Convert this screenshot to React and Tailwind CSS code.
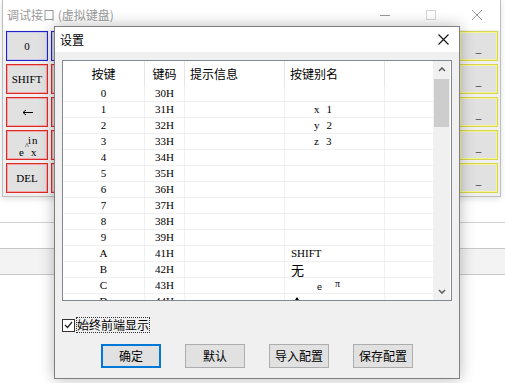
import React from "react";

const cjk = "font-[family-name:'Microsoft_YaHei','Noto_Sans_CJK_SC',sans-serif]";
const serif = "font-[family-name:'Liberation_Serif','Noto_Sans_CJK_SC',serif]";

const rows = [
  ["0", "30H", ""],
  ["1", "31H", "x 1"],
  ["2", "32H", "y 2"],
  ["3", "33H", "z 3"],
  ["4", "34H", ""],
  ["5", "35H", ""],
  ["6", "36H", ""],
  ["7", "37H", ""],
  ["8", "38H", ""],
  ["9", "39H", ""],
  ["A", "41H", "SHIFT"],
  ["B", "42H", "无"],
  ["C", "43H", "epi"],
  ["D", "44H", "caret"],
];

const keyStyles = {
  blue: "border-[#2222c8] shadow-[inset_0_0_0_1px_#c8c8ee]",
  red: "border-[#dd2a2a] shadow-[inset_0_0_0_1px_#f3a6a6]",
  yellow: "border-[#d6d650] shadow-[inset_0_0_0_1px_#f6f690]",
};

function Key({ color, w = "w-[42px]", children }) {
  return (
    <div
      className={`h-[30px] ${w} shrink-0 border bg-[#e1e1e1] flex items-center justify-center text-[11px] text-black ${serif} ${keyStyles[color]}`}>
      {children}
    </div>
  );
}

function ExpLabel() {
  return (
    <div className="relative w-[30px] h-[24px] leading-none">
      <span className="absolute left-[16px] top-[2px] tracking-[1px]">in</span>
      <span className="absolute left-[7px] top-[14px]">e</span>
      <span className="absolute left-[13px] top-[10px] text-[8px]">^</span>
      <span className="absolute left-[19px] top-[14px]">x</span>
    </div>
  );
}

function LeftArrow() {
  return (
    <svg width="11" height="7" viewBox="0 0 11 7" fill="none" stroke="#000" strokeWidth="1">
      <path d="M1 3.5H11M1 3.5L4 1M1 3.5L4 6" />
    </svg>
  );
}

function Chevron({ down }) {
  return (
    <svg width="8" height="5" viewBox="0 0 8 5" fill="none" stroke="#606060" strokeWidth="1.6">
      <path d={down ? "M1 1L4 4L7 1" : "M1 4L4 1L7 4"} />
    </svg>
  );
}

function KeyboardWindow() {
  const leftKeys = [
    ["blue", "0"],
    ["red", "SHIFT"],
    ["red", <LeftArrow />],
    ["red", <ExpLabel />],
    ["red", "DEL"],
  ];
  return (
    <div className="absolute left-[2px] top-0 w-[499px] h-[197px] flex flex-col border-x border-b border-[#bdbdbd] shadow-[0_2px_6px_rgba(0,0,0,0.12)]">
      <div className={`h-[30px] bg-white flex items-center pl-[4px] text-[12px] text-[#9a9a9a] ${cjk}`}>
        <span className="flex-1">调试接口 (虚拟键盘)</span>
        <div className="w-[46px] flex justify-center">
          <div className="w-[10px] h-px bg-[#9a9a9a]" />
        </div>
        <div className="w-[46px] flex justify-center">
          <div className="w-[10px] h-[10px] border border-[#d6d6d6]" />
        </div>
        <div className="w-[46px] flex justify-center">
          <svg width="10" height="10" viewBox="0 0 10 10" stroke="#9a9a9a" strokeWidth="1">
            <path d="M0 0L10 10M10 0L0 10" />
          </svg>
        </div>
      </div>
      <div className="flex-1 bg-[#f0f0f0] flex justify-between pl-[3px] pr-[2px] pt-px">
        <div className="flex gap-[3px]">
          <div className="flex flex-col gap-[3px]">
            {leftKeys.map(([c, label], i) => (
              <Key key={i} color={c}>
                {label}
              </Key>
            ))}
          </div>
          <div className="flex flex-col gap-[3px]">
            {leftKeys.map(([c], i) => (
              <Key key={i} color={c} />
            ))}
          </div>
        </div>
        <div className="flex flex-col gap-[3px]">
          {leftKeys.map((_, i) => (
            <Key key={i} color="yellow" w="w-[39px]">
              <span className="pt-[4px]">_</span>
            </Key>
          ))}
        </div>
      </div>
    </div>
  );
}

function AliasCell({ value }) {
  if (value === "epi") {
    return (
      <div className="relative h-full">
        <span className="absolute left-[32px] top-[2px] text-[9px] font-[family-name:'Liberation_Sans',sans-serif]">e</span>
        <span className="absolute left-[50px] -top-[2px] text-[10px]">π</span>
      </div>
    );
  }
  if (value === "caret") {
    return (
      <div className="relative h-full">
        <span className="absolute left-[10px] top-[3px] w-0 h-0 border-x-[2px] border-x-transparent border-b-[3px] border-b-black" />
      </div>
    );
  }
  if (value.includes(" ")) {
    const [a, b] = value.split(" ");
    return (
      <div className="pl-[29px] flex gap-[7px]">
        <span>{a}</span>
        <span>{b}</span>
      </div>
    );
  }
  const isCjk = value === "无";
  return <div className={`pl-[6px] ${isCjk ? `${cjk} text-[13px]` : ""}`}>{value}</div>;
}

function SettingsTable() {
  const cols = "grid grid-cols-[82px_40px_100px_100px_48px]";
  return (
    <div className="w-[390px] h-[241px] border border-[#828790] bg-white flex">
      <div className="w-[370px] h-full overflow-hidden">
        <div className={`${cols} h-[25px] text-[12px] text-black ${cjk}`}>
          <div className="flex items-center justify-center border-r border-[#e5e5e5]">按键</div>
          <div className="flex items-center justify-center border-r border-[#e5e5e5]">键码</div>
          <div className="flex items-center pl-[5px] border-r border-[#e5e5e5]">提示信息</div>
          <div className="flex items-center pl-[5px] border-r border-[#e5e5e5]">按键别名</div>
          <div />
        </div>
        {rows.map(([k, code, alias]) => (
          <div key={k} className={`${cols} h-4 border-b border-[#f0f0f0] text-[11px] leading-[15px] text-black ${serif}`}>
            <div className="text-center border-r border-[#f0f0f0]">{k}</div>
            <div className="text-center border-r border-[#f0f0f0]">{code}</div>
            <div className="border-r border-[#f0f0f0]" />
            <div className="border-r border-[#f0f0f0]">
              <AliasCell value={alias} />
            </div>
            <div />
          </div>
        ))}
      </div>
      <div className="w-[17px] h-full bg-[#f0f0f0] flex flex-col">
        <div className="h-[17px] flex items-center justify-center">
          <Chevron />
        </div>
        <div className="mt-px mx-px h-[48px] bg-[#cdcdcd]" />
        <div className="flex-1" />
        <div className="h-[17px] flex items-center justify-center">
          <Chevron down />
        </div>
      </div>
    </div>
  );
}

function DialogButton({ primary, children }) {
  return (
    <button
      type="button"
      className={`w-[60px] h-[24px] bg-[#e1e1e1] text-[12px] text-black ${cjk} ${
        primary ? "border-2 border-[#0078d7]" : "border border-[#adadad]"
      }`}>
      {children}
    </button>
  );
}

function SettingsDialog() {
  return (
    <div className="absolute left-[54px] top-[26px] w-[406px] h-[353px] flex flex-col border border-[#7f7f7f] bg-[#f0f0f0] shadow-[0_0_14px_rgba(0,0,0,0.28)]">
      <div className={`h-[25px] bg-white flex items-center justify-between pl-[5px] pr-[10px] text-[12px] text-black ${cjk}`}>
        <span>设置</span>
        <svg width="11" height="11" viewBox="0 0 11 11" stroke="#111" strokeWidth="1.1">
          <path d="M0.5 0.5L10.5 10.5M10.5 0.5L0.5 10.5" />
        </svg>
      </div>
      <div className="pl-[7px] pt-[8px]">
        <SettingsTable />
        <div className="mt-[17px] flex items-center gap-[2px]">
          <div className="w-[13px] h-[13px] border border-[#333] bg-white flex items-center justify-center">
            <svg width="9" height="8" viewBox="0 0 9 8" fill="none" stroke="#222" strokeWidth="1.2">
              <path d="M1 4L3.5 6.5L8 1" />
            </svg>
          </div>
          <span className={`text-[12px] leading-[14px] text-black outline-1 outline-dotted outline-[#333] ${cjk}`}>
            始终前端显示
          </span>
        </div>
        <div className="mt-[12px] pl-[39px] flex gap-[24px]">
          <DialogButton primary>确定</DialogButton>
          <DialogButton>默认</DialogButton>
          <DialogButton>导入配置</DialogButton>
          <DialogButton>保存配置</DialogButton>
        </div>
      </div>
    </div>
  );
}

export default function App() {
  return (
    <div className="relative w-[505px] h-[383px] overflow-hidden bg-white">
      <div className="pt-[222px]">
        <div className="h-[26px] border-t border-[#d0d0d0]" />
        <div className="h-[27px] border-y border-[#c8c8c8] bg-[#f3f3f3]" />
      </div>
      <KeyboardWindow />
      <SettingsDialog />
    </div>
  );
}
